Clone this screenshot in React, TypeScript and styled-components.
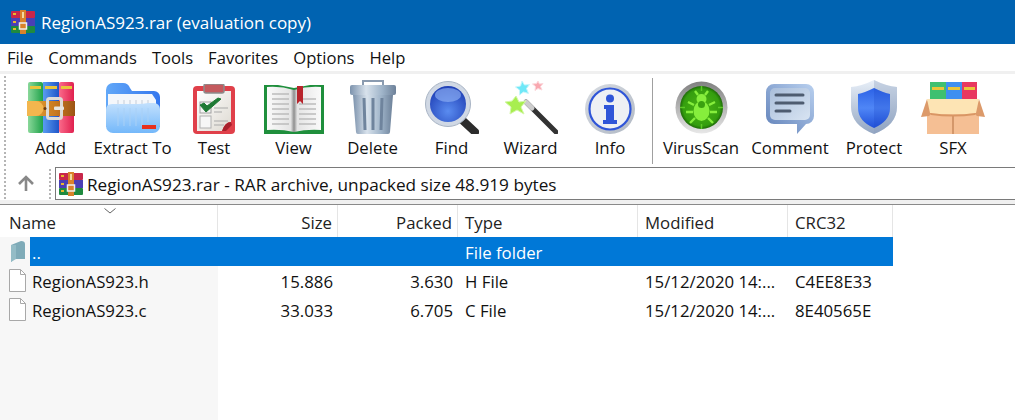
import styled, { createGlobalStyle } from "styled-components";

const GlobalStyle = createGlobalStyle`
  html, body {
    margin: 0;
    padding: 0;
    background: white;
  }
  body {
    font-family: "Open Sans", "Noto Sans", "Liberation Sans", sans-serif;
    color: #111;
  }
`;

const Window = styled.div`
  width: 1015px;
  height: 420px;
  display: flex;
  flex-direction: column;
  overflow: hidden;
  background: white;
`;

const TitleBar = styled.div`
  height: 44px;
  flex: none;
  display: flex;
  align-items: center;
  gap: 6px;
  padding-left: 11px;
  background: #0063b1;
  color: white;
  font-size: 17px;
`;

const MenuBar = styled.div`
  height: 27px;
  flex: none;
  display: flex;
  align-items: center;
  gap: 15px;
  padding-left: 7px;
  border-bottom: 3px solid #f0f0f0;
  font-size: 16.6px;
`;

const Toolbar = styled.div`
  height: 93px;
  flex: none;
  display: flex;
  align-items: stretch;
`;

const Grip = styled.div<{ $left: number; $right?: number }>`
  flex: none;
  width: 0;
  margin: 2px ${(p) => p.$right ?? 0}px 1px ${(p) => p.$left}px;
  border-left: 2px dotted #b5b5b5;
`;

const ToolItem = styled.div<{ $w: number }>`
  width: ${(p) => p.$w}px;
  flex: none;
  display: flex;
  flex-direction: column;
  align-items: center;
`;

const IconSlot = styled.div`
  height: 60px;
  display: flex;
  align-items: flex-end;
  justify-content: center;
`;

const ToolLabel = styled.div`
  margin-top: 2px;
  font-size: 16.8px;
  line-height: 24px;
  white-space: nowrap;
`;

const ToolSep = styled.div`
  flex: none;
  width: 1px;
  margin: 4px 1px 3px 2px;
  background: #a0a0a0;
`;

const AddressRow = styled.div`
  height: 33px;
  flex: none;
  display: flex;
  align-items: stretch;
`;

const UpButton = styled.div`
  width: 43px;
  flex: none;
  display: flex;
  align-items: center;
  justify-content: center;
  padding-right: 3px;
  box-sizing: border-box;
`;

const AddressBox = styled.div`
  flex: 1;
  margin-left: 4px;
  display: flex;
  align-items: center;
  gap: 4px;
  padding-left: 3px;
  border-top: 1px solid #7a7a7a;
  border-left: 1px solid #7a7a7a;
  border-bottom: 1px solid #7a7a7a;
  font-size: 17.2px;
`;

const AddressText = styled.span`
  padding-top: 2px;
`;

const Rule = styled.div`
  height: 4px;
  flex: none;
  background: #f0f0f0;
  border-bottom: 1px solid #8a8a8a;
`;

const FileList = styled.div`
  flex: 1;
  background: linear-gradient(to right, #f7f7f7 218px, white 218px);
  font-size: 16.8px;
`;

const COLUMNS = "218px 120px 120px 180px 150px 105px";

const HeaderRow = styled.div`
  position: relative;
  width: 893px;
  height: 32px;
  display: grid;
  grid-template-columns: ${COLUMNS};
  background: white;
`;

const HeaderCell = styled.div<{ $right?: boolean; $pad?: number }>`
  display: flex;
  align-items: center;
  justify-content: ${(p) => (p.$right ? "flex-end" : "flex-start")};
  padding: 2px ${(p) => (p.$right ? 5 : 0)}px 0 ${(p) => (p.$right ? 0 : p.$pad ?? 7)}px;
  border-right: 1px solid #e5e5e5;
  color: #222;
`;

const SortMark = styled.svg`
  position: absolute;
  left: 104px;
  top: 3px;
`;

const Row = styled.div<{ $selected?: boolean }>`
  width: 893px;
  height: 29px;
  display: grid;
  grid-template-columns: ${COLUMNS};
  background: ${(p) => (p.$selected ? "#0078d7" : "transparent")};
  color: ${(p) => (p.$selected ? "white" : "#111")};
`;

const NameCell = styled.div`
  display: flex;
  align-items: center;
  overflow: hidden;
`;

const IconBox = styled.div<{ $selected?: boolean }>`
  width: 30px;
  height: 100%;
  flex: none;
  display: flex;
  align-items: center;
  justify-content: center;
  padding-left: 5px;
  box-sizing: border-box;
  background: ${(p) => (p.$selected ? "#f7f7f7" : "transparent")};
`;

const Cell = styled.div<{ $right?: boolean }>`
  display: flex;
  align-items: center;
  justify-content: ${(p) => (p.$right ? "flex-end" : "flex-start")};
  padding: 2px ${(p) => (p.$right ? 5 : 0)}px 0 ${(p) => (p.$right ? 0 : 7)}px;
  white-space: nowrap;
`;

const NameText = styled.span`
  margin-left: 2px;
  padding-top: 2px;
`;

function RarSmall() {
  return (
    <svg width="24" height="24" viewBox="0 0 24 24">
      <rect x="0" y="1" width="24" height="7" rx="1" fill="#c8274a" />
      <rect x="0" y="8" width="24" height="8" fill="#4a3fb5" />
      <rect x="0" y="16" width="24" height="7" rx="1" fill="#1f8a3f" />
      <rect x="2" y="3" width="3" height="2" fill="#e8b82e" />
      <rect x="2" y="11" width="3" height="2" fill="#e8b82e" />
      <rect x="2" y="18" width="3" height="2" fill="#e8b82e" />
      <rect x="9" y="0" width="6" height="24" fill="#d9822b" />
      <rect x="8.500" y="13" width="7" height="6" fill="none" stroke="#eee" strokeWidth="1.500" />
      <rect x="11" y="2" width="2" height="6" fill="#f3d9a0" />
    </svg>
  );
}

function AddIcon() {
  return (
    <svg width="48" height="52" viewBox="0 0 48 52">
      <defs>
        <linearGradient id="addG" x1="0" x2="1">
          <stop offset="0" stopColor="#8ad89a" />
          <stop offset="1" stopColor="#1fa24a" />
        </linearGradient>
        <linearGradient id="addB" x1="0" x2="1">
          <stop offset="0" stopColor="#5a9cf0" />
          <stop offset="1" stopColor="#1f55c8" />
        </linearGradient>
        <linearGradient id="addR" x1="0" x2="1">
          <stop offset="0" stopColor="#fa6a8a" />
          <stop offset="1" stopColor="#e0204f" />
        </linearGradient>
        <linearGradient id="addBelt" x1="0" x2="1">
          <stop offset="0" stopColor="#e8a838" />
          <stop offset="0.6" stopColor="#c87820" />
          <stop offset="1" stopColor="#9c5414" />
        </linearGradient>
      </defs>
      <rect x="1" y="0" width="15" height="51" rx="2" fill="url(#addG)" />
      <rect x="16" y="0" width="16" height="51" fill="url(#addB)" />
      <rect x="32" y="0" width="15" height="51" rx="2" fill="url(#addR)" />
      <rect x="3" y="4" width="11" height="3" fill="#e9c53a" />
      <rect x="18" y="4" width="12" height="3" fill="#e9c53a" />
      <rect x="34" y="4" width="11" height="3" fill="#e9c53a" />
      <rect x="0" y="19" width="48" height="15" fill="url(#addBelt)" />
      <path d="M0 19h9a7.500 7.500 0 0 1 0 15H0z" fill="#f3b64e" />
      <rect x="20.500" y="16.500" width="14" height="20" rx="2" fill="none" stroke="#dedbd6" strokeWidth="3" />
      <rect x="27" y="24.500" width="10" height="3.500" rx="1" fill="#e8e5e0" />
      <circle cx="18" cy="26.500" r="1.500" fill="#6a3a10" />
    </svg>
  );
}

function ExtractIcon() {
  return (
    <svg width="54" height="52" viewBox="0 0 54 52">
      <defs>
        <linearGradient id="exFront" x1="0" y1="0" x2="0" y2="1">
          <stop offset="0" stopColor="#c2e0fd" />
          <stop offset="1" stopColor="#74b8fa" />
        </linearGradient>
        <linearGradient id="exBack" x1="0" y1="0" x2="1" y2="0">
          <stop offset="0" stopColor="#62a8f8" />
          <stop offset="1" stopColor="#3577ee" />
        </linearGradient>
      </defs>
      <path d="M0 8a7 7 0 0 1 7-7h10q5 0 7 5l2 3h22a6 6 0 0 1 6 6v30H0z" fill="url(#exBack)" />
      <path d="M2 12h44l4 6v14H2z" fill="#f4f7fb" />
      <path d="M12 18v14M18 18v14M24 18v14M30 18v14M36 18v14M42 18v14" stroke="#c5cdd8" />
      <path d="M0 28q0-6 6-6h26q5 0 10-1h6a6 6 0 0 1 6 6v17a7 7 0 0 1-7 7H7a7 7 0 0 1-7-7z" fill="url(#exFront)" />
      <path d="M12 26v18M18 26v18M24 26v18M30 26v18M36 26v18M42 26v14" stroke="#a8d0f6" />
      <rect x="36" y="43" width="14" height="4" fill="#e8301e" />
    </svg>
  );
}

function TestIcon() {
  return (
    <svg width="42" height="50" viewBox="0 0 42 50">
      <defs>
        <linearGradient id="testPaper" x1="0" y1="0" x2="1" y2="1">
          <stop offset="0" stopColor="#ffffff" />
          <stop offset="1" stopColor="#dedad2" />
        </linearGradient>
      </defs>
      <rect x="0" y="2" width="42" height="48" rx="4" fill="#e0404a" />
      <path d="M4 7h34v31q-6 0-9 9H4z" fill="url(#testPaper)" />
      <path d="M29 47q3-9 9-9l1 3-6 6z" fill="#a8202c" />
      <rect x="11" y="0" width="20" height="9" rx="2" fill="#c45a5e" stroke="#8c8c8c" strokeWidth="1.500" />
      <rect x="7" y="18" width="11" height="11" fill="#f4f4f4" stroke="#a0a0a0" />
      <path d="M7 21l6 7 15-13-3-1-11 8-3-3z" fill="#1f7a35" stroke="#1f7a35" />
      <path d="M21 24h14M21 28h8" stroke="#aaa" strokeWidth="1.200" />
      <rect x="7" y="32" width="11" height="12" fill="#f6f6f6" stroke="#b0b0b0" />
      <path d="M21 37h14M21 41h10" stroke="#aaa" strokeWidth="1.200" />
    </svg>
  );
}

function ViewIcon() {
  return (
    <svg width="60" height="49" viewBox="0 0 60 49">
      <defs>
        <linearGradient id="viewPage" x1="0" x2="1">
          <stop offset="0" stopColor="#fafafa" />
          <stop offset="0.44" stopColor="#e4e4e4" />
          <stop offset="0.5" stopColor="#8e8e8e" />
          <stop offset="0.56" stopColor="#e4e4e4" />
          <stop offset="1" stopColor="#fafafa" />
        </linearGradient>
      </defs>
      <path d="M0 0h14l16 3 16-3h14v49H0z" fill="#1f8f3c" />
      <path d="M3 2q14-1 27 3q13-4 27-3v43q-14-1-27 2q-13-3-27-2z" fill="url(#viewPage)" />
      <path
        d="M8 9h17M8 14h17M8 19h17M8 24h17M8 29h17M8 34h17M8 39h17M35 14h17M35 19h17M35 24h17M35 29h17M35 34h17M35 39h17"
        stroke="#bcbcbc"
        strokeWidth="1.300"
      />
      <path d="M33 1h6v18l-3-3-3 3z" fill="#b8242c" />
    </svg>
  );
}

function DeleteIcon() {
  return (
    <svg width="46" height="54" viewBox="0 0 46 54">
      <defs>
        <linearGradient id="delBody" x1="0" x2="1">
          <stop offset="0" stopColor="#7d93ad" />
          <stop offset="0.35" stopColor="#d8e2ec" />
          <stop offset="0.7" stopColor="#9fb4c9" />
          <stop offset="1" stopColor="#6d8199" />
        </linearGradient>
      </defs>
      <path d="M13 6V1h20v5" fill="none" stroke="#8a9bb0" strokeWidth="2" />
      <rect x="0" y="5" width="46" height="10" rx="2" fill="url(#delBody)" />
      <path d="M3 15h40l-3 37a2 2 0 0 1-2 2H8a2 2 0 0 1-2-2z" fill="url(#delBody)" />
      <path d="M14 18l1 32M23 18v32M32 18l-1 32" stroke="#6f849d" strokeWidth="3" />
    </svg>
  );
}

function FindIcon() {
  return (
    <svg width="54" height="53" viewBox="0 0 54 53">
      <defs>
        <radialGradient id="findLens" cx="0.5" cy="0.7" r="0.7">
          <stop offset="0" stopColor="#5a8cf0" />
          <stop offset="1" stopColor="#1f3fb5" />
        </radialGradient>
      </defs>
      <path d="M35 37l15 14" stroke="#2c2c2c" strokeWidth="8" strokeLinecap="round" />
      <circle cx="23" cy="23" r="22.500" fill="#d0d8e4" stroke="#a8b4c4" />
      <circle cx="23" cy="23" r="18" fill="url(#findLens)" />
      <ellipse cx="23" cy="14" rx="13" ry="7" fill="#8fb0f5" opacity="0.65" />
    </svg>
  );
}

function WizardIcon() {
  return (
    <svg width="54" height="53" viewBox="0 0 54 53">
      <path d="M22 21l30 30" stroke="#333" strokeWidth="5" strokeLinecap="round" />
      <path d="M22 21l6 6" stroke="#ccc" strokeWidth="5" strokeLinecap="round" />
      <path d="M12 15l3 6 7-1-5 6 3 7-7-4-7 4 1-7-6-5 7-1z" fill="#a8ee50" stroke="#d4f7a8" />
      <path d="M18 0l2.500 4 5-.5-3 4 2 5-5-1.500-4 3 0-5-4-3 5-1z" fill="#6fe8f8" stroke="#c8f6fb" />
      <path d="M34 0l1.500 3 3.500-.5-2.500 3 1.500 3.500-4-1.500-3 2 .5-4-3-2.500 4-.5z" fill="#f9a8b0" stroke="#fcd8dc" />
    </svg>
  );
}

function InfoIcon() {
  return (
    <svg width="50" height="50" viewBox="0 0 50 50">
      <defs>
        <linearGradient id="infoRim" x1="0" y1="0" x2="1" y2="1">
          <stop offset="0" stopColor="#d8dce2" />
          <stop offset="1" stopColor="#b0b8c4" />
        </linearGradient>
      </defs>
      <circle cx="25" cy="25" r="25" fill="url(#infoRim)" />
      <circle cx="25" cy="25" r="20.500" fill="#eef0f4" stroke="#2f55d8" strokeWidth="2.200" />
      <circle cx="25" cy="14.500" r="4" fill="#2f55d8" />
      <path d="M19 21h10v15h3v4H18v-4h3V25h-2z" fill="#2f55d8" />
    </svg>
  );
}

function VirusIcon() {
  return (
    <svg width="53" height="53" viewBox="0 0 53 53">
      <defs>
        <linearGradient id="virRim" x1="0" y1="0" x2="0" y2="1">
          <stop offset="0" stopColor="#808080" />
          <stop offset="1" stopColor="#e8e8e8" />
        </linearGradient>
        <radialGradient id="virCore">
          <stop offset="0" stopColor="#4cb416" />
          <stop offset="0.85" stopColor="#349e0e" />
          <stop offset="1" stopColor="#1e6a08" />
        </radialGradient>
      </defs>
      <circle cx="26.500" cy="26.500" r="26" fill="url(#virRim)" />
      <circle cx="26.500" cy="26.500" r="21.500" fill="url(#virCore)" />
      <path d="M26.500 5v5M26.500 43v5M5 26.500h5M43 26.500h5" stroke="#5ec828" strokeWidth="1.500" />
      <ellipse cx="26.500" cy="30" rx="8" ry="10" fill="#86ee3c" />
      <circle cx="26.500" cy="18" r="5" fill="#86ee3c" />
      <circle cx="26.500" cy="23.500" r="3.500" fill="#3aa010" />
      <path
        d="M19 24l-6-3M34 24l6-3M18 31h-7M35 31h7M20 37l-5 5M33 37l5 5M23 14l-3-4M30 14l3-4"
        stroke="#86ee3c"
        strokeWidth="2.400"
      />
    </svg>
  );
}

function CommentIcon() {
  return (
    <svg width="48" height="50" viewBox="0 0 48 50">
      <defs>
        <linearGradient id="comEdge" x1="0" y1="1" x2="1" y2="0">
          <stop offset="0" stopColor="#5f80b8" />
          <stop offset="1" stopColor="#b9d0ef" />
        </linearGradient>
        <linearGradient id="comBg" x1="0" y1="0" x2="1" y2="1">
          <stop offset="0" stopColor="#a9bedb" />
          <stop offset="1" stopColor="#d8e4f2" />
        </linearGradient>
      </defs>
      <path d="M8 0h32a8 8 0 0 1 8 8v24a8 8 0 0 1-8 8l-9 10V40H8a8 8 0 0 1-8-8V8a8 8 0 0 1 8-8z" fill="url(#comEdge)" />
      <path d="M9 4h30a5 5 0 0 1 5 5v22a5 5 0 0 1-5 5H9a5 5 0 0 1-5-5V9a5 5 0 0 1 5-5z" fill="url(#comBg)" />
      <path d="M10 11h27M10 19h27M10 27h14" stroke="#4e5c70" strokeWidth="3" strokeLinecap="round" />
    </svg>
  );
}

function ProtectIcon() {
  return (
    <svg width="46" height="54" viewBox="0 0 46 54">
      <defs>
        <linearGradient id="proRim" x1="0" x2="0" y1="0" y2="1">
          <stop offset="0" stopColor="#e8eff8" />
          <stop offset="1" stopColor="#93a6c2" />
        </linearGradient>
        <linearGradient id="proCore" x1="0" x2="0" y1="0" y2="1">
          <stop offset="0" stopColor="#2c62e6" />
          <stop offset="0.5" stopColor="#4f86f6" />
          <stop offset="1" stopColor="#2050d8" />
        </linearGradient>
      </defs>
      <path d="M23 0q12 6 23 7v20q0 18-23 27Q0 45 0 27V7Q11 6 23 0z" fill="url(#proRim)" />
      <path d="M23 0q12 6 23 7v20q0 18-23 27z" fill="#8a9ebc" opacity="0.35" />
      <path d="M23 8q10 5 16 6v14q0 13-16 20Q7 41 7 28V14q6-1 16-6z" fill="url(#proCore)" />
      <path d="M23 8q10 5 16 6v14q0 13-16 20z" fill="#1c46c8" opacity="0.25" />
    </svg>
  );
}

function SfxIcon() {
  return (
    <svg width="64" height="52" viewBox="0 0 64 52">
      <rect x="9" y="0" width="16" height="24" fill="#3fc070" />
      <rect x="25" y="0" width="16" height="24" fill="#3f8ff0" />
      <rect x="41" y="0" width="15" height="24" fill="#e8385f" />
      <rect x="11" y="5" width="12" height="3" fill="#eac53a" />
      <rect x="27" y="5" width="12" height="3" fill="#eac53a" />
      <rect x="43" y="5" width="11" height="3" fill="#eac53a" />
      <path d="M6 22h52v30H6z" fill="#f5bf94" />
      <path d="M32 33v19" stroke="#c98a5c" strokeWidth="1.500" />
      <path d="M6 17L0 35l8-1 3-3zM58 17l6 18-8-1-3-3z" fill="#dc9a6a" />
      <path d="M6 17h52l-3 14q-23 3-46 0z" fill="#fde4b4" />
      <path d="M9 31q23 3 46 0l-1 2q-22 3-44 0z" fill="#d99664" />
    </svg>
  );
}

const TOOLS_LEFT = [
  { label: "Add", w: 81, icon: <AddIcon /> },
  { label: "Extract To", w: 83, icon: <ExtractIcon /> },
  { label: "Test", w: 80, icon: <TestIcon /> },
  { label: "View", w: 79, icon: <ViewIcon /> },
  { label: "Delete", w: 79, icon: <DeleteIcon /> },
  { label: "Find", w: 79, icon: <FindIcon /> },
  { label: "Wizard", w: 79, icon: <WizardIcon /> },
  { label: "Info", w: 80, icon: <InfoIcon /> },
];

const TOOLS_RIGHT = [
  { label: "VirusScan", w: 94, icon: <VirusIcon /> },
  { label: "Comment", w: 84, icon: <CommentIcon /> },
  { label: "Protect", w: 84, icon: <ProtectIcon /> },
  { label: "SFX", w: 74, icon: <SfxIcon /> },
];

const MENUS = ["File", "Commands", "Tools", "Favorites", "Options", "Help"];

const FILES = [
  { name: "RegionAS923.h", size: "15.886", packed: "3.630", type: "H File", crc: "C4EE8E33" },
  { name: "RegionAS923.c", size: "33.033", packed: "6.705", type: "C File", crc: "8E40565E" },
];

function Tool({ label, w, icon }: { label: string; w: number; icon: React.ReactNode }) {
  return (
    <ToolItem $w={w}>
      <IconSlot>{icon}</IconSlot>
      <ToolLabel>{label}</ToolLabel>
    </ToolItem>
  );
}

function App() {
  return (
    <Window>
      <GlobalStyle />
      <TitleBar>
        <RarSmall />
        RegionAS923.rar (evaluation copy)
      </TitleBar>
      <MenuBar>
        {MENUS.map((m) => (
          <span key={m}>{m}</span>
        ))}
      </MenuBar>
      <Toolbar>
        <Grip $left={4} $right={4} />
        {TOOLS_LEFT.map((t) => (
          <Tool key={t.label} {...t} />
        ))}
        <ToolSep />
        {TOOLS_RIGHT.map((t) => (
          <Tool key={t.label} {...t} />
        ))}
      </Toolbar>
      <AddressRow>
        <Grip $left={4} />
        <UpButton>
          <svg width="18" height="17" viewBox="0 0 18 17">
            <path d="M9 16V2M2 9l7-7 7 7" fill="none" stroke="#888" strokeWidth="2.600" />
          </svg>
        </UpButton>
        <Grip $left={0} />
        <AddressBox>
          <RarSmall />
          <AddressText>RegionAS923.rar - RAR archive, unpacked size 48.919 bytes</AddressText>
        </AddressBox>
      </AddressRow>
      <Rule />
      <FileList>
        <HeaderRow>
          <HeaderCell $pad={9}>Name</HeaderCell>
          <HeaderCell $right>Size</HeaderCell>
          <HeaderCell $right>Packed</HeaderCell>
          <HeaderCell>Type</HeaderCell>
          <HeaderCell>Modified</HeaderCell>
          <HeaderCell>CRC32</HeaderCell>
          <SortMark width="12" height="6" viewBox="0 0 12 6">
            <path d="M0.500 0.500L6 5l5.500-4.500" fill="none" stroke="#666" />
          </SortMark>
        </HeaderRow>
        <Row $selected>
          <NameCell>
            <IconBox $selected>
              <svg width="14" height="21" viewBox="0 0 14 21">
                <path d="M0 4l10-4q4 0 4 3v15H3l-3 3z" fill="#7fabb8" />
                <path d="M0 4v17l5-3V4z" fill="#94bcc6" />
              </svg>
            </IconBox>
            <NameText>..</NameText>
          </NameCell>
          <Cell $right />
          <Cell $right />
          <Cell>File folder</Cell>
          <Cell />
          <Cell />
        </Row>
        {FILES.map((f) => (
          <Row key={f.name}>
            <NameCell>
              <IconBox>
                <svg width="17" height="23" viewBox="0 0 17 23">
                  <path d="M0.500 0.500h11l5 5v17H0.500z" fill="white" stroke="#a8a8a8" />
                  <path d="M11.500 0.500v5h5" fill="none" stroke="#a8a8a8" />
                </svg>
              </IconBox>
              <NameText>{f.name}</NameText>
            </NameCell>
            <Cell $right>{f.size}</Cell>
            <Cell $right>{f.packed}</Cell>
            <Cell>{f.type}</Cell>
            <Cell>15/12/2020 14:...</Cell>
            <Cell>{f.crc}</Cell>
          </Row>
        ))}
      </FileList>
    </Window>
  );
}

export default App;
